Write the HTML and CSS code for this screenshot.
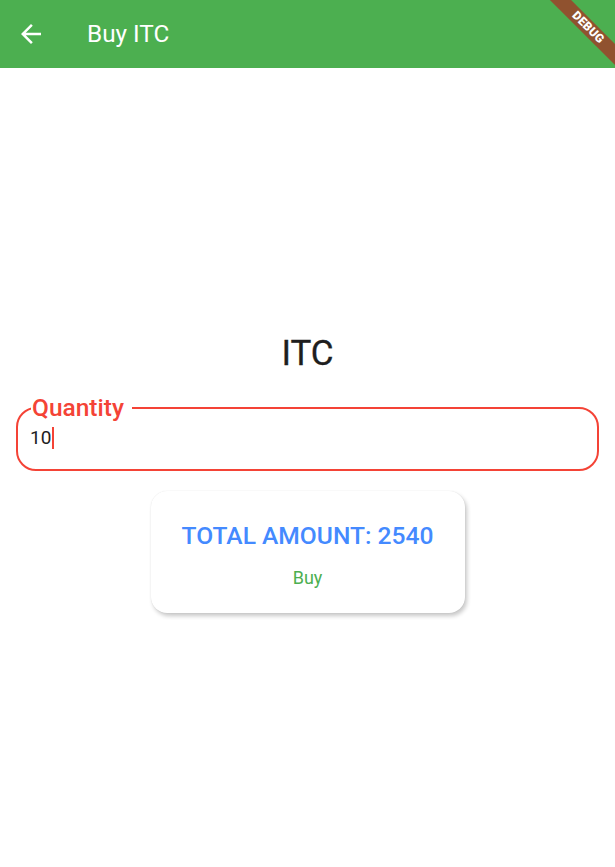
FILE: index.html
```html
<!DOCTYPE html>
<html>
<head>
<meta charset="utf-8">
<link rel="stylesheet" href="styles.css">
</head>
<body>
<div class="app">
  <header class="appbar">
    <svg class="back" width="30" height="30" viewBox="0 0 24 24"><path d="M20 11H7.83l5.59-5.59L12 4l-8 8 8 8 1.41-1.41L7.83 13H20v-2z" fill="#fff"/></svg>
    <span class="title">Buy ITC</span>
  </header>
  <main class="body">
    <h1 class="name">ITC</h1>
    <fieldset class="field">
      <legend class="label">Quantity</legend>
      <div class="value">10<span class="caret"></span></div>
    </fieldset>
    <div class="card">
      <div class="total">TOTAL AMOUNT: 2540</div>
      <div class="buy">Buy</div>
    </div>
  </main>
  <div class="debug"><span>DEBUG</span></div>
</div>
</body>
</html>
```
FILE: styles.css
```css
html, body {
  margin: 0;
  padding: 0;
  background: #fff;
  font-family: Roboto, "Liberation Sans", sans-serif;
}
.app {
  position: relative;
  width: 615px;
  height: 867px;
  overflow: hidden;
}
.appbar {
  height: 68px;
  background: #4caf50;
  display: flex;
  align-items: center;
  padding-left: 16px;
  box-sizing: border-box;
}
.back {
  display: block;
}
.title {
  color: #fff;
  font-size: 24.3px;
  margin-left: 41px;
  margin-top: -1px;
}
.body {
  display: flex;
  flex-direction: column;
  align-items: center;
  padding-top: 264px;
}
.name {
  margin: 0;
  font-size: 35px;
  font-weight: 400;
  color: #1e1e1e;
  line-height: 44px;
  -webkit-text-stroke: 0.3px #1e1e1e;
}
.field {
  box-sizing: border-box;
  align-self: stretch;
  margin: 21px 16px 0;
  border: 2px solid #f44336;
  border-radius: 20px;
  padding: 0 13px 0 12px;
  height: 74px;
  min-width: 0;
}
.label {
  color: #f44336;
  font-size: 24.5px;
  font-weight: 500;
  padding: 0 8px 0 1px;
  margin-left: 1px;
  line-height: 22px;
}
.value {
  font-size: 19px;
  color: #212121;
  line-height: 22px;
  margin-top: 8px;
  display: flex;
  align-items: center;
}
.caret {
  display: inline-block;
  width: 2px;
  height: 22px;
  background: #f44336;
  margin-left: 1px;
}
.card {
  margin-top: 20px;
  width: 314px;
  height: 122px;
  box-sizing: border-box;
  border-radius: 16px;
  background: #fff;
  box-shadow: 2px 3px 4px rgba(0,0,0,0.22), 0 0 1px rgba(0,0,0,0.12);
  display: flex;
  flex-direction: column;
  align-items: center;
  padding-top: 30px;
}
.total {
  color: #448aff;
  font-size: 24.6px;
  font-weight: 500;
  line-height: 30px;
}
.buy {
  color: #4caf50;
  font-size: 18px;
  margin-top: 16px;
}
.debug {
  position: absolute;
  left: 540px;
  top: 20px;
  width: 96px;
  height: 15px;
  background: rgba(183, 28, 28, 0.63);
  transform: rotate(45deg);
  display: flex;
  align-items: center;
  justify-content: center;
}
.debug span {
  color: #fff;
  font-size: 12px;
  font-weight: 900;
  line-height: 15px;
  letter-spacing: 0.2px;
}
```
